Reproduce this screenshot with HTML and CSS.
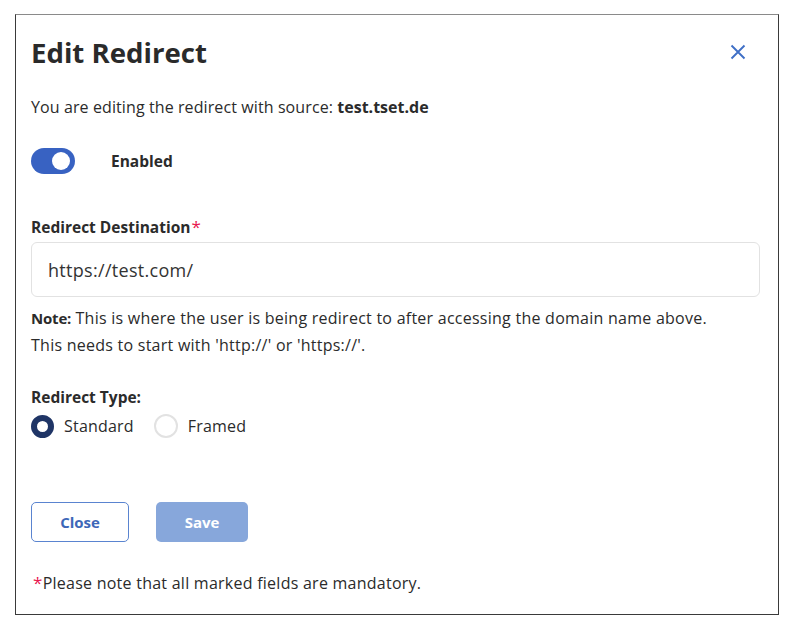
FILE: index.html
```html
<!DOCTYPE html>
<html lang="en">
<head>
<meta charset="utf-8">
<title>Edit Redirect</title>
<link rel="stylesheet" href="styles.css">
</head>
<body>
<div class="dialog">
  <div class="header">
    <h1 class="title">Edit Redirect</h1>
    <button class="close-x" aria-label="Close">
      <svg width="16" height="16" viewBox="0 0 16 16"><path d="M1.5 1.5 L14.5 14.5 M14.5 1.5 L1.5 14.5" stroke="#3f6fc6" stroke-width="1.9" fill="none"/></svg>
    </button>
  </div>
  <p class="source">You are editing the redirect with source: <b>test.tset.de</b></p>
  <div class="toggle-row">
    <span class="toggle"><span class="knob"></span></span>
    <span class="toggle-label">Enabled</span>
  </div>
  <label class="field-label">Redirect Destination<span class="req">*</span></label>
  <div class="input">https://test.com/</div>
  <p class="note"><b>Note:</b> This is where the user is being redirect to after accessing the domain name above.<br>This needs to start with 'http://' or 'https://'.</p>
  <div class="type-label">Redirect Type:</div>
  <div class="radios">
    <span class="radio-item"><span class="radio checked"></span>Standard</span>
    <span class="radio-item"><span class="radio"></span>Framed</span>
  </div>
  <div class="buttons">
    <button class="btn btn-close">Close</button>
    <button class="btn btn-save">Save</button>
  </div>
  <p class="mandatory"><span class="req">*</span>Please note that all marked fields are mandatory.</p>
</div>
</body>
</html>
```
FILE: styles.css
```css
* { box-sizing: border-box; }
html, body { margin: 0; padding: 0; background: #fff; }
body {
  font-family: "Open Sans", Roboto, "Liberation Sans", sans-serif;
  color: #2b2b2b;
  padding: 14px 0 0 15px;
}
.dialog {
  width: 764px;
  height: 601px;
  border: 1px solid #3a3a3a;
  border-top-color: #8a8a8a;
  padding: 0 18px 0 15px;
  display: flex;
  flex-direction: column;
}
.header {
  display: flex;
  justify-content: space-between;
  align-items: center;
  height: 74px;
}
.title {
  margin: 0;
  font-size: 27.6px;
  line-height: 34px;
  font-weight: 700;
  color: #2a2a2a;
}
.close-x {
  border: 0;
  background: none;
  padding: 0;
  margin-right: 14px;
  display: flex;
}
.source {
  margin: 8px 0 0;
  font-size: 16px;
  letter-spacing: 0.1px;
  line-height: 20px;
}
.source b { letter-spacing: 0; }
.toggle-row {
  display: flex;
  align-items: center;
  margin-top: 31px;
  height: 26px;
}
.toggle {
  width: 44px;
  height: 26px;
  border-radius: 13px;
  background: #3862c2;
  display: flex;
  align-items: center;
  justify-content: flex-end;
  padding-right: 5px;
}
.knob {
  width: 18px;
  height: 18px;
  border-radius: 50%;
  background: #fff;
}
.toggle-label {
  margin-left: 36px;
  font-size: 15.5px;
  font-weight: 700;
  line-height: 20px;
}
.field-label {
  margin-top: 43px;
  font-size: 15.5px;
  font-weight: 700;
  line-height: 20px;
}
.req { color: #e8174f; font-weight: 400; font-size: 17px; line-height: 1; margin-left: 1px; }
.input {
  margin-top: 5px;
  width: 729px;
  height: 55px;
  border: 1px solid #e2e2e2;
  border-radius: 6px;
  padding: 0 16px;
  display: flex;
  align-items: center;
  font-size: 18px;
  letter-spacing: 0.3px;
  color: #333;
}
.note {
  margin: 8px 0 0;
  font-size: 16px;
  letter-spacing: 0.25px;
  line-height: 27px;
}
.note b { font-size: 15px; letter-spacing: -0.2px; }
.type-label {
  margin-top: 27px;
  font-size: 15.5px;
  font-weight: 700;
  line-height: 22px;
}
.radios {
  display: flex;
  align-items: center;
  gap: 20px;
  margin-top: 6px;
  font-size: 16px;
  letter-spacing: 0.2px;
  line-height: 24px;
}
.radio-item {
  display: flex;
  align-items: center;
  gap: 10px;
}
.radio {
  width: 24px;
  height: 24px;
  border-radius: 50%;
  border: 2px solid #e2e2e2;
  background: #fff;
}
.radio.checked {
  width: 23px;
  height: 23px;
  border: 6.5px solid #1f3566;
}
.buttons {
  display: flex;
  gap: 27px;
  margin-top: 64px;
}
.btn {
  height: 40px;
  border-radius: 5px;
  font-family: inherit;
  font-size: 15px;
  font-weight: 700;
}
.btn-close {
  width: 98px;
  background: #fff;
  border: 1px solid #5a84d0;
  color: #3d67b8;
}
.btn-save {
  width: 92px;
  background: #87a7db;
  border: 0;
  color: #fff;
}
.mandatory {
  margin: 30px 0 0;
  font-size: 16px;
  letter-spacing: 0.25px;
  line-height: 22px;
}
.mandatory .req { margin-left: 2px; margin-right: 0; }
```
